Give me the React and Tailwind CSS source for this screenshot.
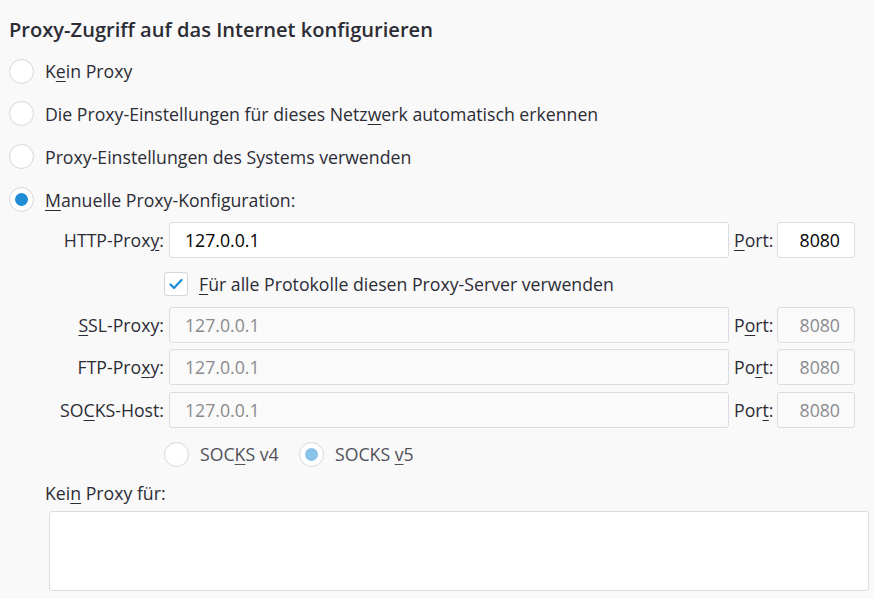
import React from "react";

function U({ children }) {
  return <span className="underline underline-offset-[3px] decoration-1">{children}</span>;
}

function Radio({ checked, disabled }) {
  return (
    <span className="w-[25px] h-[25px] rounded-full border border-[#d7d7db] bg-white flex items-center justify-center shrink-0">
      {checked && (
        <span className={`w-[13px] h-[13px] rounded-full ${disabled ? "bg-[#89c3e8]" : "bg-[#1f8dd6]"}`} />
      )}
    </span>
  );
}

function ProxyRow({ label, value, port, disabled, className }) {
  return (
    <div className={`flex items-center h-[36px] ${className}`}>
      <div className="w-[165px] text-right pr-[1px] whitespace-nowrap">{label}</div>
      <input
        readOnly
        value={value}
        className={`ml-[4px] w-[560px] h-[36px] border border-[#dcdce0] rounded-[3px] pl-[15px] outline-none ${
          disabled ? "bg-[#fafafa] text-[#8a8a8e]" : "bg-white text-black"
        }`}
      />
      <div className="ml-[5px] w-[43px] whitespace-nowrap">{port}</div>
      <input
        readOnly
        value="8080"
        className={`w-[78px] h-[36px] border border-[#dcdce0] rounded-[3px] text-right pr-[14px] outline-none ${
          disabled ? "bg-[#fafafa] text-[#8a8a8e]" : "bg-white text-black"
        }`}
      />
    </div>
  );
}

export default function App() {
  const radios = [
    { label: <>K<U>e</U>in Proxy</>, h: "h-[42px]" },
    { label: <>Die Proxy-Einstellungen für dieses Netz<U>w</U>erk automatisch erkennen</>, h: "h-[43px]" },
    { label: <>Proxy-Einstellun<U>g</U>en des Systems verwenden</>, h: "h-[43px]" },
    { label: <><U>M</U>anuelle Proxy-Konfiguration:</>, h: "h-[43px]", checked: true },
  ];

  return (
    <div className="w-[874px] h-[599px] overflow-hidden bg-[#f9f9fa] text-[#2c2c35] font-['Open_Sans',sans-serif] text-[17.7px] leading-[24px]">
      <div className="h-[40px] mt-[10px] pl-[9px] flex items-center text-[20.1px] font-semibold text-[#2c2c34] whitespace-nowrap">
        Proxy-Zugriff auf das Internet konfigurieren
      </div>

      {radios.map((r, i) => (
        <div key={i} className={`${r.h} pl-[9px] flex items-center gap-[11px] whitespace-nowrap`}>
          <Radio checked={r.checked} />
          <span>{r.label}</span>
        </div>
      ))}

      <ProxyRow className="mt-[1px]" label={<>HTTP-Prox<U>y</U>:</>} value="127.0.0.1" port={<><U>P</U>ort:</>} />

      <div className="mt-[14px] pl-[164px] flex items-center h-[24px] gap-[11px] whitespace-nowrap">
        <span className="w-[24px] h-[24px] border border-[#d7d7db] rounded-[3px] bg-white flex items-center justify-center">
          <svg width="14" height="12" viewBox="0 0 14 12">
            <path d="M1.5 6.5 L5 10 L12.5 2" fill="none" stroke="#1f8dd6" strokeWidth="2.2" strokeLinecap="round" strokeLinejoin="round" />
          </svg>
        </span>
        <span><U>F</U>ür alle Protokolle diesen Proxy-Server verwenden</span>
      </div>

      <ProxyRow className="mt-[11px]" disabled label={<><U>S</U>SL-Proxy:</>} value="127.0.0.1" port={<>P<U>o</U>rt:</>} />
      <ProxyRow className="mt-[6px]" disabled label={<>FTP-Pro<U>x</U>y:</>} value="127.0.0.1" port={<>Po<U>r</U>t:</>} />
      <ProxyRow className="mt-[7px]" disabled label={<>SO<U>C</U>KS-Host:</>} value="127.0.0.1" port={<>Por<U>t</U>:</>} />

      <div className="mt-[14px] pl-[164px] flex items-center h-[24px] whitespace-nowrap">
        <Radio />
        <span className="ml-[11px] w-[99px] text-[#505058]">SOC<U>K</U>S v4</span>
        <Radio checked disabled />
        <span className="ml-[11px] text-[#505058]">SOCKS <U>v</U>5</span>
      </div>

      <div className="mt-[15px] pl-[45px]">Kei<U>n</U> Proxy für:</div>

      <textarea
        readOnly
        className="block mt-[6px] ml-[49px] w-[820px] h-[80px] bg-white border border-[#dcdce0] rounded-[3px] resize-none outline-none"
      />
    </div>
  );
}
